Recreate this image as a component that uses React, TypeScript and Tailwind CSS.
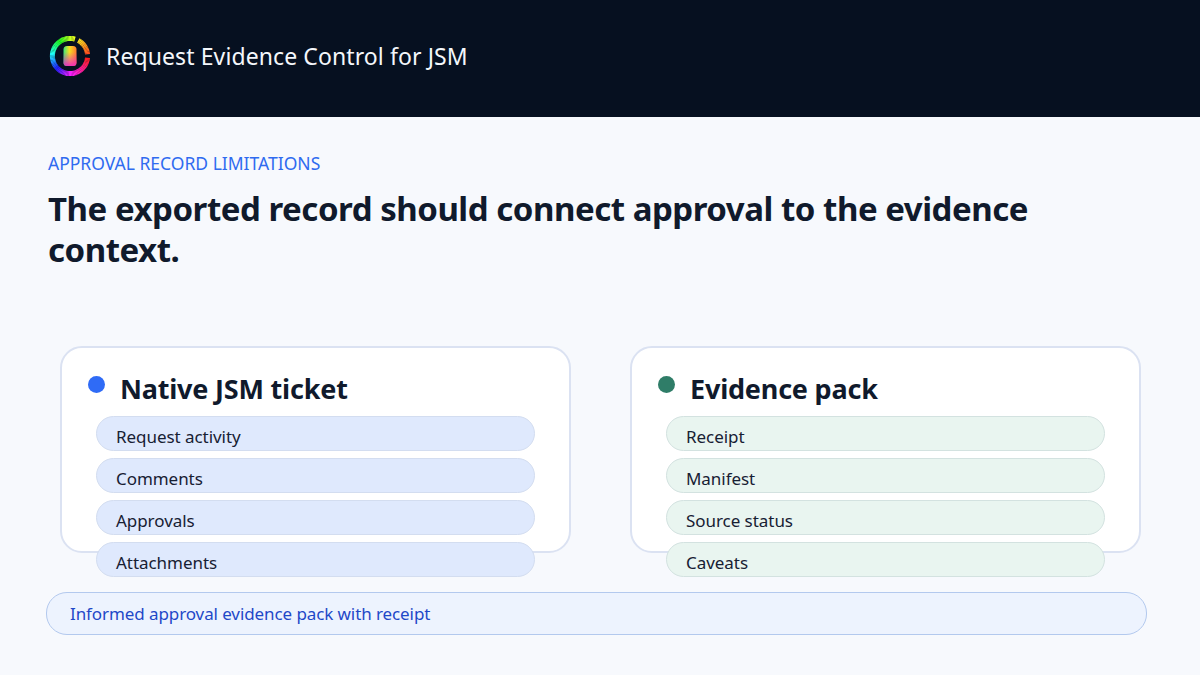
const left = ["Request activity", "Comments", "Approvals", "Attachments"];
const right = ["Receipt", "Manifest", "Source status", "Caveats"];

// ring is drawn as short arcs, going round the hue wheel
function arc(from: number, to: number) {
  const r = 17.6;
  const p = (a: number) => {
    const t = ((a - 90) * Math.PI) / 180;
    return `${22 + r * Math.cos(t)} ${22 + r * Math.sin(t)}`;
  };
  return `M${p(from)}A${r} ${r} 0 0 1 ${p(to)}`;
}

function hue(a: number) {
  const h = a < 180 ? 75 - a * 0.78 : -65 - (a - 180) * 1.222;
  return (h + 720) % 360;
}

function Logo() {
  const segs: { from: number; color: string }[] = [];
  for (let a = 0; a < 360; a += 4) {
    if ((a >= 16 && a < 28) || (a >= 84 && a < 96)) continue;
    segs.push({ from: a, color: `hsl(${hue(a)} 100% 56%)` });
  }
  return (
    <svg width="44" height="44" viewBox="0 0 44 44" fill="none" className="shrink-0">
      <defs>
        <linearGradient id="across" x1="0" y1="0" x2="1" y2="0">
          <stop offset="0" stopColor="#3ce878" />
          <stop offset="0.45" stopColor="#f4e020" />
          <stop offset="1" stopColor="#ff7a30" />
        </linearGradient>
        <linearGradient id="down" x1="0" y1="0" x2="0" y2="1">
          <stop offset="0.3" stopColor="#f020c8" stopOpacity="0" />
          <stop offset="1" stopColor="#f020c8" stopOpacity="0.9" />
        </linearGradient>
      </defs>
      {segs.map((s) => (
        <path key={s.from} d={arc(s.from, s.from + 4.4)} stroke={s.color} strokeWidth="5" />
      ))}
      <rect x="15.5" y="12" width="13" height="20" rx="3.5" fill="url(#across)" />
      <rect x="15.5" y="12" width="13" height="20" rx="3.5" fill="url(#down)" />
    </svg>
  );
}

function Card({ title, dot, items, pill }: { title: string; dot: string; items: string[]; pill: string }) {
  return (
    <div className="w-[511px] h-[207px] bg-white border-2 border-[#dbe2f2] rounded-[22px] pl-[26px] pr-[34px] pt-[26px]">
      <div className="flex items-start h-[42px]">
        <span className={`w-[17px] h-[17px] rounded-full mt-[2px] ${dot}`} />
        <h2 className="ml-[15px] -mt-[1px] text-[27px] leading-[32px] font-bold text-[#101a2c] tracking-[-0.2px]">{title}</h2>
      </div>
      <div className="ml-2 flex flex-col gap-[7px]">
        {items.map((t) => (
          <div key={t} className={`h-[35px] shrink-0 rounded-[18px] border pl-[19px] text-[17px] tracking-[-0.05px] leading-[39px] text-[#172033] ${pill}`}>
            {t}
          </div>
        ))}
      </div>
    </div>
  );
}

export default function App() {
  return (
    <div className="w-[1200px] h-[675px] overflow-hidden bg-[#f7f9fd] font-['Noto_Sans','Open_Sans',sans-serif]">
      <header className="h-[117px] bg-[#061020] flex items-center pl-[48px] pb-[5px] gap-[14px]">
        <Logo />
        <div className="mt-[1px] text-[23px] text-[#f4f7fb] tracking-[0.1px]">Request Evidence Control for JSM</div>
      </header>
      <main className="px-[48px]">
        <div className="pt-[34px] text-[17.5px] leading-[24px] text-[#2f6bf0]">APPROVAL RECORD LIMITATIONS</div>
        <h1 className="mt-[13px] text-[33px] leading-[41px] font-bold text-[#101a2c] w-[1040px] tracking-[-0.47px]">
          The exported record should connect approval to the evidence context.
        </h1>
        <div className="mt-[76px] ml-[12px] flex gap-[59px]">
          <Card title="Native JSM ticket" dot="bg-[#2f6bf6]" items={left} pill="bg-[#dfe9fd] border-[#d3ddf0]" />
          <Card title="Evidence pack" dot="bg-[#2f7d68]" items={right} pill="bg-[#e9f5f0] border-[#d3e2e0]" />
        </div>
        <div className="mt-[39px] -ml-[2px] w-[1101px] h-[43px] rounded-[21px] border border-[#b3c9ee] bg-[#edf3fe] pl-[23px] text-[17px] leading-[42px] text-[#1f48c8] tracking-[-0.09px]">
          Informed approval evidence pack with receipt
        </div>
      </main>
    </div>
  );
}
